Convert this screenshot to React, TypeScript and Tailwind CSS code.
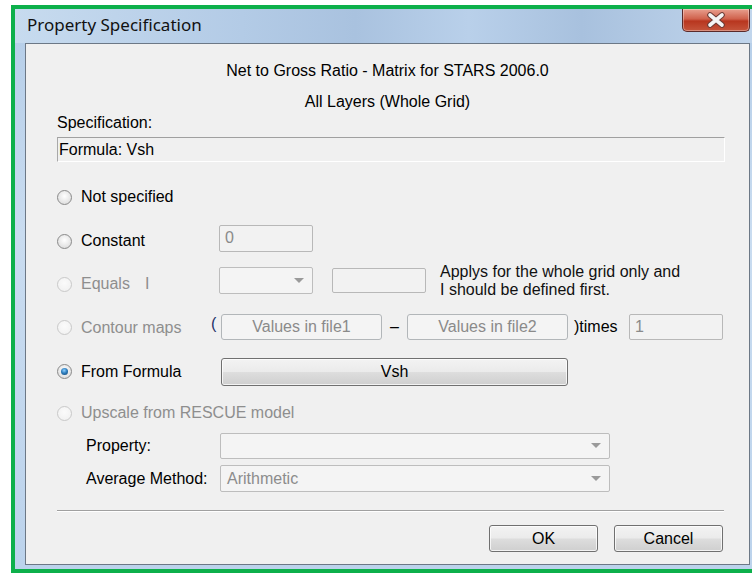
import React from "react";

const ui = { fontFamily: '"Liberation Sans", Arial, sans-serif' };
const titleFont = { fontFamily: '"Noto Sans", "Open Sans", sans-serif' };

function Radio({ checked = false, disabled = false }: { checked?: boolean; disabled?: boolean }) {
  return (
    <span
      className={`flex w-[15px] h-[15px] shrink-0 items-center justify-center rounded-full border ${
        disabled
          ? "border-[#c9c9c9] bg-[radial-gradient(circle_at_50%_40%,#fbfbfb_0%,#efefef_100%)]"
          : "border-[#8a8a8a] bg-[radial-gradient(circle_at_50%_40%,#ffffff_0%,#e2e2e2_70%,#cfcfcf_100%)]"
      }`}
    >
      {checked && (
        <span className="w-[7px] h-[7px] rounded-full bg-[radial-gradient(circle_at_45%_35%,#8fd0ff_0%,#2f7fbf_45%,#0d3f6b_100%)]" />
      )}
    </span>
  );
}

function Field({ w, h = 27, value = "", className = "" }: { w: number; h?: number; value?: string; className?: string }) {
  return (
    <div
      className={`flex items-center px-[5px] rounded-[2px] border border-[#b8b8b8] bg-[#f2f2f2] text-[#8a8a8a] ${className}`}
      style={{ width: w, height: h }}
    >
      {value}
    </div>
  );
}

function Combo({ w, h = 27, value = "" }: { w: number; h?: number; value?: string }) {
  return (
    <div
      className="flex items-center justify-between pl-[6px] pr-[8px] rounded-[2px] border border-[#bdbdbd] bg-[#f4f4f4] text-[#8c8c8c]"
      style={{ width: w, height: h }}
    >
      <span>{value}</span>
      <svg width="10" height="6" viewBox="0 0 10 6">
        <path d="M0 0 L10 0 L5 5 Z" fill="#9a9a9a" />
      </svg>
    </div>
  );
}

function DisabledButton({ label, w }: { label: string; w: number }) {
  return (
    <div
      className="flex h-[26px] items-center justify-center rounded-[3px] border border-[#b2b6b9] bg-[#f4f4f4] text-[#8a8a8a]"
      style={{ width: w }}
    >
      {label}
    </div>
  );
}

function PushButton({ label, w, h = 27 }: { label: string; w: number; h?: number }) {
  return (
    <div
      className="flex items-center justify-center rounded-[3px] border border-[#707070] bg-[linear-gradient(to_bottom,#f3f3f3_0%,#ebebeb_48%,#dddddd_52%,#cfcfcf_100%)] shadow-[inset_0_0_0_1px_rgba(255,255,255,0.75)] text-black"
      style={{ width: w, height: h }}
    >
      {label}
    </div>
  );
}

export default function App() {
  return (
    <div className="w-[752px] h-[573px] overflow-hidden bg-white pl-[11px] pt-[5px]" style={ui}>
      {/* highlight frame around the window */}
      <div className="w-[760px] h-[568px] border-[4px] border-r-0 border-[#0db04b]">
        {/* Aero window frame */}
        <div className="flex h-full flex-col bg-[linear-gradient(to_bottom,#b4cde8_0%,#c9dcf0_40%,#bcd3ec_100%)]">
          {/* title bar */}
          <div className="flex h-[34px] shrink-0 items-start justify-between bg-[linear-gradient(90deg,#c7dbef_0%,#b3cbe6_30%,#a9c2df_45%,#b9d0ea_60%,#a8c1de_75%,#c4d8ee_100%)]">
            <span className="pl-[12px] pt-[5px] text-[17px] leading-[22px] text-[#111]" style={titleFont}>
              Property Specification
            </span>
            <div className="mr-[21px] flex h-[23px] w-[68px] items-center justify-center rounded-b-[5px] border border-t-0 border-[#5a2a2a] bg-[linear-gradient(to_bottom,#e8a08f_0%,#d0614c_45%,#b8361f_55%,#c5553c_100%)] shadow-[inset_0_0_0_1px_rgba(255,255,255,0.35)]">
              <svg width="20" height="16" viewBox="0 0 20 16">
                <path
                  d="M4 3 L16 13 M16 3 L4 13"
                  stroke="#6b3a34"
                  strokeWidth="5.6"
                  strokeLinecap="round"
                />
                <path
                  d="M4 3 L16 13 M16 3 L4 13"
                  stroke="#f4f4f4"
                  strokeWidth="3.6"
                  strokeLinecap="round"
                />
              </svg>
            </div>
          </div>

          {/* frame sides + client area */}
          <div className="flex flex-1 pl-[10px] pb-[4px]">
            <div className="flex h-[522px] w-[725px] flex-col border border-[#6c7886] bg-[#f0f0f0] text-[16px] leading-[18px] text-black">
              <div className="mt-[17px] flex h-[20px] items-center justify-center">
                Net to Gross Ratio - Matrix for STARS 2006.0
              </div>
              <div className="mt-[11px] flex h-[20px] items-center justify-center">All Layers (Whole Grid)</div>
              <div className="mt-[2px] flex h-[18px] items-center pl-[31px]">Specification:</div>
              <div className="ml-[31px] mt-[5px] flex h-[25px] w-[668px] items-center border border-t-[#a0a0a0] border-l-[#a8a8a8] border-r-white border-b-white pl-[1px]">
                Formula: Vsh
              </div>

              {/* option rows */}
              <div className="mt-[13px] flex h-[44px] items-center pl-[31px]">
                <Radio />
                <span className="ml-[9px]">Not specified</span>
              </div>

              <div className="flex h-[44px] items-center pl-[31px]">
                <div className="flex w-[162px] items-center">
                  <Radio />
                  <span className="ml-[9px]">Constant</span>
                </div>
                <Field w={94} value="0" className="-mt-[6px]" />
              </div>

              <div className="flex h-[42px] items-center pl-[31px]">
                <div className="flex w-[162px] items-center text-[#8e8e8e]">
                  <Radio disabled />
                  <span className="ml-[9px]">Equals</span>
                  <span className="ml-[15px]">I</span>
                </div>
                <div className="-mt-[7px] flex items-center">
                  <Combo w={94} />
                  <Field w={94} h={25} className="ml-[19px]" />
                  <div className="ml-[14px] text-[#111]">
                    <div>Applys for the whole grid only and</div>
                    <div>I should be defined first.</div>
                  </div>
                </div>
              </div>

              <div className="flex h-[45px] items-center pl-[31px]">
                <div className="flex w-[154px] items-center text-[#8e8e8e]">
                  <Radio disabled />
                  <span className="ml-[9px]">Contour maps</span>
                </div>
                <span className="w-[10px] -mt-[8px] text-[#1d2f66]">(</span>
                <div className="-mt-[2px] flex items-center">
                  <DisabledButton label="Values in file1" w={161} />
                  <span className="w-[25px] text-center">–</span>
                  <DisabledButton label="Values in file2" w={161} />
                  <span className="w-[61px] pl-[6px]">)times</span>
                  <Field w={94} h={26} value="1" />
                </div>
              </div>

              <div className="flex h-[43px] items-center pl-[31px]">
                <div className="flex w-[164px] items-center">
                  <Radio checked />
                  <span className="ml-[9px]">From Formula</span>
                </div>
                <PushButton label="Vsh" w={347} h={28} />
              </div>

              <div className="flex h-[40px] items-center pl-[31px] text-[#8e8e8e]">
                <Radio disabled />
                <span className="ml-[9px]">Upscale from RESCUE model</span>
              </div>

              <div className="flex h-[26px] items-center pl-[60px]">
                <span className="w-[134px]">Property:</span>
                <Combo w={390} h={26} />
              </div>
              <div className="mt-[6px] flex h-[27px] items-center pl-[60px]">
                <span className="w-[134px]">Average Method:</span>
                <Combo w={390} h={27} value="Arithmetic" />
              </div>

              {/* etched separator */}
              <div className="ml-[31px] mt-[18px] h-[2px] w-[667px] border-t border-b border-t-[#a0a0a0] border-b-white" />

              <div className="mt-[13px] flex justify-end gap-[16px] pr-[26px]">
                <PushButton label="OK" w={109} />
                <PushButton label="Cancel" w={109} />
              </div>
            </div>
          </div>
        </div>
      </div>
    </div>
  );
}
